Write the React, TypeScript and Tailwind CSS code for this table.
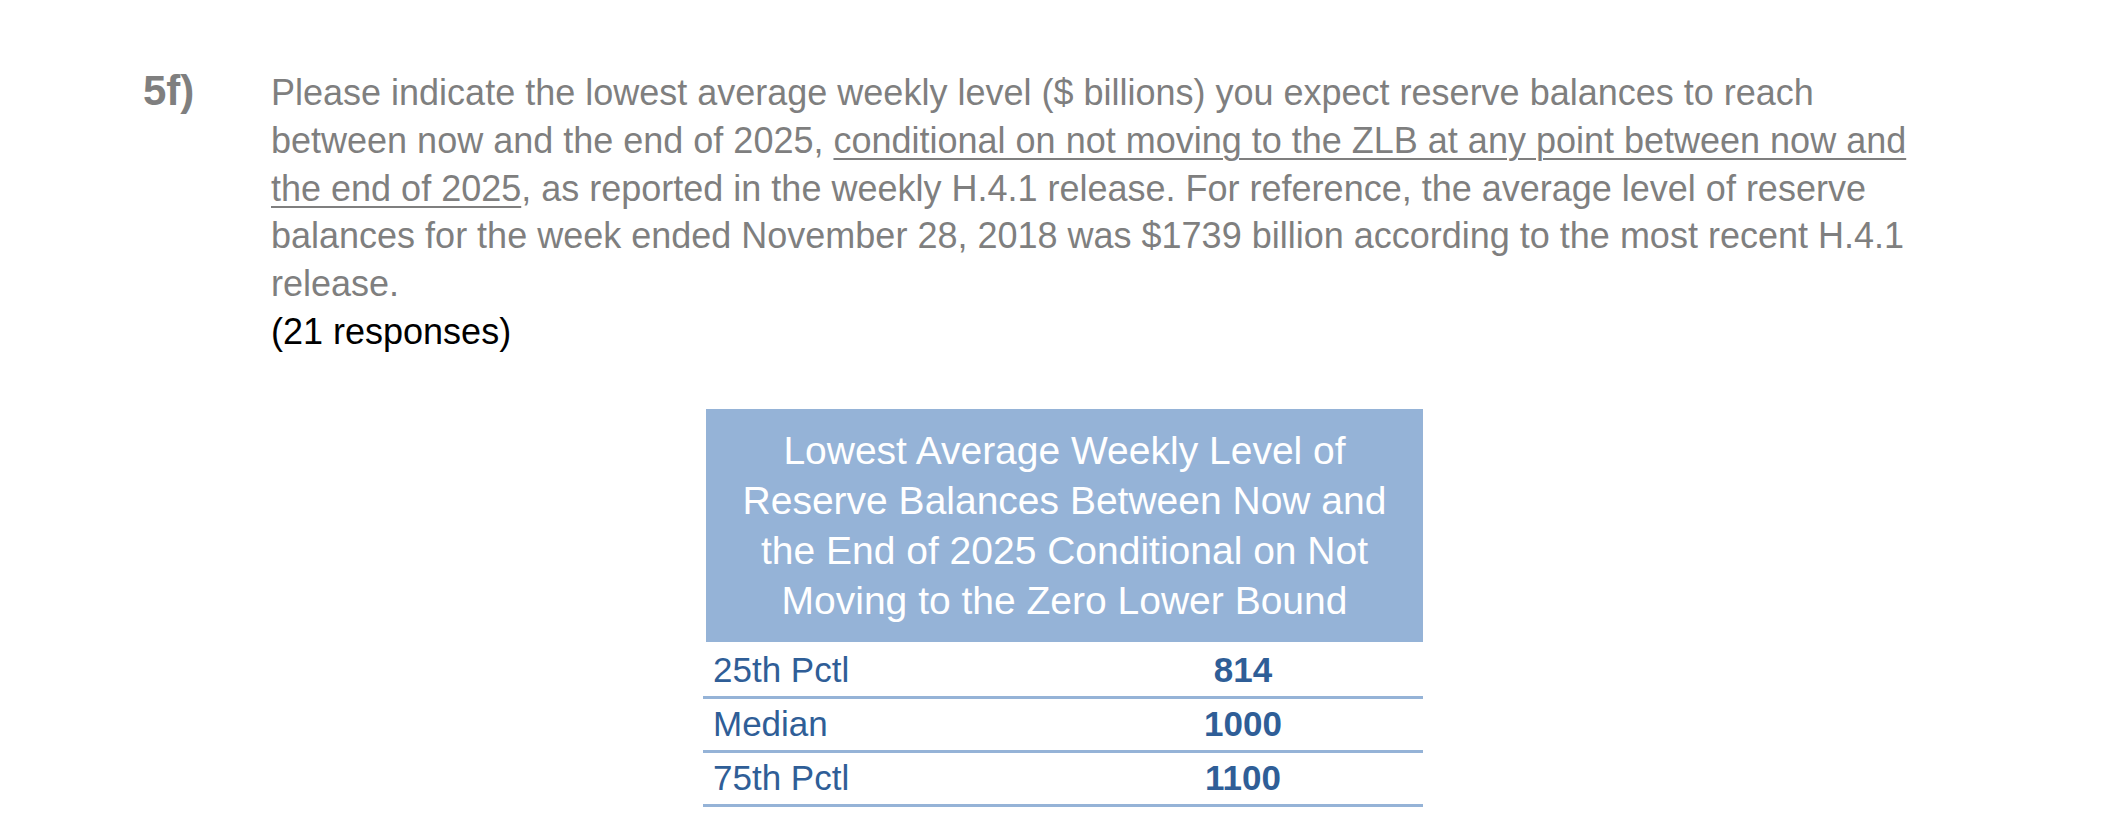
const rows = [
  { label: "25th Pctl", value: "814" },
  { label: "Median", value: "1000" },
  { label: "75th Pctl", value: "1100" },
];

export default function App() {
  return (
    <div
      className="w-[2101px] h-[819px] bg-white overflow-hidden"
      style={{ fontFamily: '"Liberation Sans", Arial, sans-serif' }}
    >
      <div className="flex items-baseline pt-[67px]">
        <div className="w-[271px] pl-[143px] shrink-0 text-[42px] font-bold text-[#7f7f7f] leading-[47.8px]">
          5f)
        </div>
        <div className="text-[36px] leading-[47.8px]">
          <p className="text-[#7f7f7f]">
            Please indicate the lowest average weekly level ($ billions) you expect reserve balances to reach
            <br />
            between now and the end of 2025,{" "}
            <span className="underline decoration-2 underline-offset-[5px]">
              conditional on not moving to the ZLB at any point between now and
              <br />
              the end of 2025
            </span>
            , as reported in the weekly H.4.1 release. For reference, the average level of reserve
            <br />
            balances for the week ended November 28, 2018 was $1739 billion according to the most recent H.4.1
            <br />
            release.
          </p>
          <p className="text-black">(21 responses)</p>
        </div>
      </div>

      <div className="ml-[706px] mt-[53px] w-[717px]">
        <div className="bg-[#95b3d7] pt-[17px] pb-[16px] text-center text-white text-[39px] leading-[50px]">
          Lowest Average Weekly Level of
          <br />
          Reserve Balances Between Now and
          <br />
          the End of 2025 Conditional on Not
          <br />
          Moving to the Zero Lower Bound
        </div>
        <div className="-ml-[3px] w-[720px] pt-[3px]">
          {rows.map((r) => (
            <div
              key={r.label}
              className="flex h-[54px] items-center border-b-[3px] border-[#95b3d7] text-[35px] text-[#2f5e97]"
            >
              <div className="w-1/2 pl-[10px]">{r.label}</div>
              <div className="w-1/2 text-center font-bold">{r.value}</div>
            </div>
          ))}
        </div>
      </div>
    </div>
  );
}
